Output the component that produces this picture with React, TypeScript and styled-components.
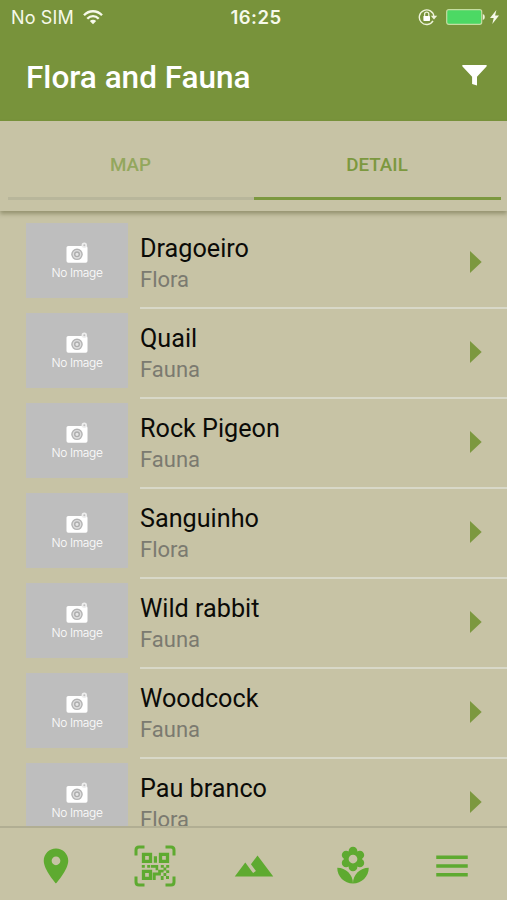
import React from "react";
import styled, { createGlobalStyle } from "styled-components";

const color = {
  header: "#78933b",
  sand: "#c7c3a5",
  olive: "#7c983f",
  leaf: "#5eaa30",
};

const GlobalStyle = createGlobalStyle`
  * { box-sizing: border-box; }
  html, body { margin: 0; height: 100%; background: ${color.sand}; }
  body { font-family: Roboto, "Liberation Sans", sans-serif; overflow: hidden; }
  svg { display: block; flex: none; }
`;

const Screen = styled.div`
  width: 507px;
  height: 900px;
  display: flex;
  flex-direction: column;
  overflow: hidden;
  background: ${color.sand};
`;

const Header = styled.header`
  height: 121px;
  flex: none;
  background: ${color.header};
  color: #fff;
`;

const StatusBar = styled.div`
  height: 34px;
  padding: 0 8px 0 11px;
  display: grid;
  grid-template-columns: 1fr auto 1fr;
  align-items: center;
  font-family: Inter, sans-serif;
  font-size: 18px;
  color: #f6f9ea;
`;

const StatusGroup = styled.div<{ $end?: boolean }>`
  display: flex;
  align-items: center;
  justify-content: ${(p) => (p.$end ? "flex-end" : "flex-start")};
  gap: ${(p) => (p.$end ? 5 : 9)}px;
`;

const Carrier = styled.span`
  font-size: 18px;
  letter-spacing: 0.15px;
  line-height: 32px;
  padding-top: 2px;
`;

const Clock = styled.span`
  font-weight: 600;
  font-size: 18.5px;
  letter-spacing: 0.5px;
  line-height: 34px;
  padding-left: 2px;
`;

const TitleBar = styled.div`
  height: 87px;
  padding: 0 20px 0 26px;
  display: flex;
  align-items: center;
  justify-content: space-between;
`;

const Title = styled.h1`
  margin: 0;
  font-size: 31.5px;
  font-weight: 500;
  line-height: 87px;
`;

const FilterButton = styled.button`
  padding: 0 0 4px;
  border: 0;
  background: none;
`;

const Tabs = styled.nav`
  height: 90px;
  flex: none;
  padding: 0 6px 0 8px;
  display: grid;
  grid-template-columns: 246px 247px;
  align-items: start;
  position: relative;
  z-index: 1;
  background: ${color.sand};
  box-shadow: 0 3px 4px rgba(70, 70, 30, 0.38);
`;

const Tab = styled.button<{ $active?: boolean }>`
  height: 79px;
  padding: 13px 1px 0 0;
  border: 0;
  border-bottom: 3px solid ${(p) => (p.$active ? color.olive : "#b8b69b")};
  background: none;
  font: 500 18.8px/1 Roboto, sans-serif;
  color: ${(p) => (p.$active ? color.olive : "#93a75d")};
`;

const List = styled.ul`
  flex: 1;
  min-height: 0;
  margin: 0;
  padding: 8px 0 0;
  overflow: hidden;
  list-style: none;
`;

const Row = styled.li`
  height: 89.95px;
  padding: 4px 0 0 26px;
  display: flex;
`;

const Thumb = styled.div`
  width: 102px;
  height: 75px;
  flex: none;
  padding-top: 19px;
  display: flex;
  flex-direction: column;
  align-items: center;
  background: #bebebe;
  color: #fff;
`;

const ThumbLabel = styled.span`
  margin-top: 2px;
  font: 300 12px/16px Inter, sans-serif;
  letter-spacing: -0.35px;
  white-space: nowrap;
`;

const Content = styled.div`
  flex: 1;
  margin-left: 12px;
  display: flex;
  padding-right: 25px;
  justify-content: space-between;
  border-bottom: 2px solid #d8d8c8;
`;

const Name = styled.div`
  margin-top: 11px;
  font-size: 25.2px;
  line-height: 30px;
  color: #0b0b08;
`;

const Kind = styled.div`
  margin-top: 2px;
  font-size: 22px;
  line-height: 28px;
  color: #7b7a70;
`;

const Caret = styled.svg`
  margin-top: 28px;
  fill: ${color.olive};
`;

const BottomBar = styled.nav`
  height: 74px;
  flex: none;
  padding: 0 6px 0 7px;
  display: grid;
  grid-template-columns: repeat(5, 1fr);
  position: relative;
  background: ${color.sand};
  border-top: 2px solid #b1ae93;
`;

const NavItem = styled.button`
  padding: 17px 0 0;
  border: 0;
  background: none;
  display: flex;
  justify-content: center;
  align-items: flex-start;
`;

const NavIcon = styled.svg`
  width: 42px;
  height: 42px;
  fill: ${color.leaf};
`;

const WifiIcon = () => (
  <svg width="20" height="15" viewBox="0 0 20 15" fill="none" stroke="#f6f9ea" strokeWidth="2.3">
    <path d="M1 5.3C6-.1 14-.1 19 5.3" />
    <path d="M4.3 8.7c3.2-3.5 8.2-3.5 11.4 0" />
    <path d="M10 14.2 6.8 11c1.8-1.8 4.6-1.8 6.4 0z" fill="#f6f9ea" stroke="none" />
  </svg>
);

const LockIcon = () => (
  <svg width="23" height="18" viewBox="0 0 23 18" fill="none" stroke="#eef3da">
    <path d="M15 12.8A7.3 7.3 0 1 1 15.9 8.6" strokeWidth="1.4" />
    <path d="M12.8 7.8h6.4L16 11.4z" fill="#eef3da" stroke="none" />
    <path d="M6.6 8V6.3a2.1 2.1 0 0 1 4.2 0V8" strokeWidth="1.3" />
    <rect x="5.4" y="7.9" width="6.6" height="5" rx=".7" fill="#fff" stroke="none" />
  </svg>
);

const BatteryIcon = () => (
  <svg width="39" height="16" viewBox="0 0 39 16">
    <rect x=".7" y=".7" width="35" height="14.6" rx="2" fill="#4cd964" stroke="#c4dda0" strokeWidth="1.2" />
    <path d="M36.8 5q2 .6 2 3t-2 3z" fill="#eef3da" />
  </svg>
);

const BoltIcon = () => (
  <svg width="9" height="14" viewBox="0 0 9 14" fill="#f6f9ea">
    <path d="M6.4 0 0 8h3.7L2.3 14 9 5.6H5.1z" />
  </svg>
);

const FilterIcon = () => (
  <svg width="25" height="21" viewBox="0 0 25 21" fill="#fff">
    <path d="M.8 0h23.4q1 .5.3 1.4L15 11.7v8.8l-4.9-1.6v-7.2L.5 1.4Q-.2.5.8 0z" />
  </svg>
);

const CameraIcon = () => (
  <svg width="22" height="21" viewBox="0 0 22 21">
    <rect x=".5" y="4" width="21" height="16.7" rx="1.8" fill="#fff" />
    <circle cx="18.3" cy="3.2" r="2.7" fill="#ededed" />
    <circle cx="18.3" cy="3.2" r="1" fill="#bebebe" />
    <circle cx="11" cy="12.3" r="5.1" fill="#dedede" stroke="#b4b4b4" strokeWidth="1.4" />
    <circle cx="11" cy="12.3" r="2.3" fill="#e6e6e6" stroke="#adadad" strokeWidth="1.4" />
  </svg>
);

const QrIcon = () => (
  <NavIcon viewBox="0 0 42 42">
    <path
      d="M2 10.5V5q0-3 3-3h5.5M31.5 2H37q3 0 3 3v5.5M40 31.5V37q0 3-3 3h-5.5M10.5 40H5q-3 0-3-3v-5.5"
      fill="none"
      stroke={color.leaf}
      strokeWidth="3"
    />
    <path
      d="M9.5 9.3h7v7h-7zM26.5 9.3h7v7h-7zM9.5 26.3h7v7h-7z"
      fill="none"
      stroke={color.leaf}
      strokeWidth="3.3"
    />
    <path d="M19.8 11.2h3.2v6.6h-3.2zM7.8 20h3v2.7h-3zM13.2 20h3v2.7h-3zM17 20h7.2v5.2h-2.6v-2.4H17zM26.8 20h3v2.8h-3zM32.2 20h3v2.8h-3zM29.5 22.6h2.8v2.8h-2.8zM24.2 24.8h5.4v2.8h-2.7v2.8h-5.2v4.6h-3v-7.4h5.5zM32.2 25.2h3V28h-3zM29.5 28h2.8v3h-2.8zM26.8 31h2.8v3.9h-2.8zM32 31h3v3h-3z" />
  </NavIcon>
);

const navIcons = [
  "M12 2C8.13 2 5 5.13 5 9c0 5.25 7 13 7 13s7-7.75 7-13c0-3.87-3.13-7-7-7zm0 9.5c-1.38 0-2.5-1.12-2.5-2.5s1.12-2.5 2.5-2.5 2.5 1.12 2.5 2.5-1.12 2.5-2.5 2.5z",
  null,
  "M14 6l-3.75 5 2.85 3.8-1.6 1.2C9.81 13.75 7 10 7 10l-6 8h22L14 6z",
  "M12 22c4.97 0 9-4.03 9-9-4.97 0-9 4.03-9 9zM5.6 10.25c0 1.38 1.12 2.5 2.5 2.5.53 0 1.01-.16 1.42-.44l-.02.19c0 1.38 1.12 2.5 2.5 2.5s2.5-1.12 2.5-2.5l-.02-.19c.4.28.89.44 1.42.44 1.38 0 2.5-1.12 2.5-2.5 0-1-.59-1.85-1.43-2.25.84-.4 1.43-1.25 1.43-2.25 0-1.38-1.12-2.5-2.5-2.5-.53 0-1.01.16-1.42.44l.02-.19C14.5 2.12 13.38 1 12 1S9.5 2.12 9.5 3.5l.02.19c-.4-.28-.89-.44-1.42-.44-1.38 0-2.5 1.12-2.5 2.5 0 1 .59 1.85 1.43 2.25-.84.4-1.43 1.25-1.43 2.25zM12 5.5c1.38 0 2.5 1.12 2.5 2.5s-1.12 2.5-2.5 2.5S9.5 9.38 9.5 8s1.12-2.5 2.5-2.5zM3 13c0 4.97 4.03 9 9 9 0-4.97-4.03-9-9-9z",
  "M3 18h18v-2H3v2zm0-5h18v-2H3v2zm0-7v2h18V6H3z",
];

const species = [
  ["Dragoeiro", "Flora"],
  ["Quail", "Fauna"],
  ["Rock Pigeon", "Fauna"],
  ["Sanguinho", "Flora"],
  ["Wild rabbit", "Fauna"],
  ["Woodcock", "Fauna"],
  ["Pau branco", "Flora"],
];

export default function App() {
  return (
    <>
      <GlobalStyle />
      <Screen>
        <Header>
          <StatusBar>
            <StatusGroup>
              <Carrier>No SIM</Carrier>
              <WifiIcon />
            </StatusGroup>
            <Clock>16:25</Clock>
            <StatusGroup $end>
              <LockIcon />
              <BatteryIcon />
              <BoltIcon />
            </StatusGroup>
          </StatusBar>
          <TitleBar>
            <Title>Flora and Fauna</Title>
            <FilterButton>
              <FilterIcon />
            </FilterButton>
          </TitleBar>
        </Header>
        <Tabs>
          <Tab>MAP</Tab>
          <Tab $active>DETAIL</Tab>
        </Tabs>
        <List>
          {species.map(([name, kind]) => (
            <Row key={name}>
              <Thumb>
                <CameraIcon />
                <ThumbLabel>No Image</ThumbLabel>
              </Thumb>
              <Content>
                <div>
                  <Name>{name}</Name>
                  <Kind>{kind}</Kind>
                </div>
                <Caret width="12" height="22" viewBox="0 0 12 22">
                  <path d="M0 0l11.7 11L0 22z" />
                </Caret>
              </Content>
            </Row>
          ))}
        </List>
        <BottomBar>
          {navIcons.map((d, i) => (
            <NavItem key={i}>
              {d ? (
                <NavIcon viewBox="0 0 24 24">
                  <path d={d} />
                </NavIcon>
              ) : (
                <QrIcon />
              )}
            </NavItem>
          ))}
        </BottomBar>
      </Screen>
    </>
  );
}
